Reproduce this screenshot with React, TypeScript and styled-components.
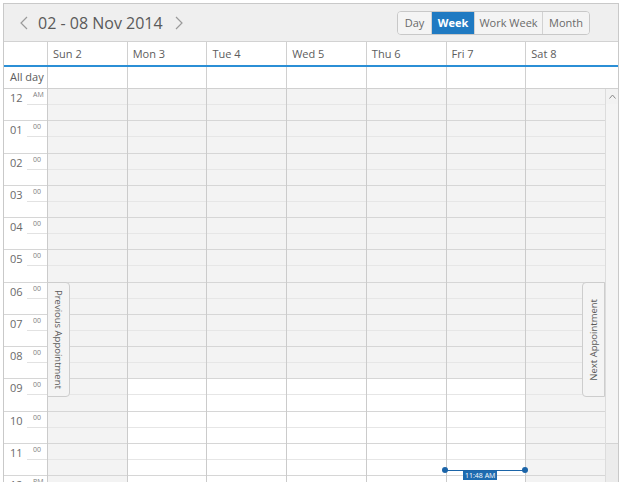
import React from 'react';
import styled, { createGlobalStyle } from 'styled-components';

const HOUR = 32.25;

const GlobalStyle = createGlobalStyle`
  html, body { margin: 0; padding: 0; background: #ffffff; }
  body { font-family: "Open Sans", "Noto Sans", sans-serif; }
`;

// Frame
const Page = styled.div`
  width: 624px;
  height: 482px;
  padding: 3px 0 0 3px;
  box-sizing: border-box;
  overflow: hidden;
`;

const Scheduler = styled.div`
  width: 616px;
  border: 1px solid #c9c9c9;
  border-bottom: none;
  box-sizing: border-box;
  color: #5c5c5c;
`;

// Toolbar
const Toolbar = styled.div`
  display: flex;
  align-items: center;
  height: 37px;
  padding: 0 28px 0 14px;
  background: #efefef;
  border-bottom: 1px solid #d2d2d2;
`;

const NavButton = styled.span`
  display: flex;
  align-items: center;
  justify-content: center;
  width: 12px;
  height: 20px;
`;

const DateTitle = styled.span`
  font-size: 16px;
  color: #5a5a5a;
  margin: 0 10px 0 8px;
`;

const ViewGroup = styled.div`
  display: flex;
  margin-left: auto;
  height: 24px;
  border: 1px solid #c8c8c8;
  border-radius: 4px;
  overflow: hidden;
  box-sizing: border-box;
`;

const ViewButton = styled.span<{ $active?: boolean; $w: number }>`
  display: flex;
  align-items: center;
  justify-content: center;
  width: ${p => p.$w}px;
  font-size: 11px;
  color: ${p => (p.$active ? '#ffffff' : '#6a6a6a')};
  font-weight: ${p => (p.$active ? 700 : 400)};
  background: ${p => (p.$active ? '#1f7ac2' : '#f4f4f4')};
  & + & { border-left: 1px solid #d2d2d2; }
`;

// Grid rows
const Row = styled.div`
  display: grid;
  grid-template-columns: 43px repeat(7, 1fr) 13px;
`;

const HeaderRow = styled(Row)`
  height: 25px;
  border-bottom: 2px solid #2b8fd6;
  box-sizing: border-box;
`;

const HeaderCell = styled.div<{ $span?: number }>`
  grid-column: span ${p => p.$span || 1};
  border-left: 1px solid #d0d0d0;
  font-size: 11px;
  line-height: 23px;
  padding-left: 5px;
  &:first-child { border-left: none; }
`;

const AllDayRow = styled(Row)`
  height: 22px;
  box-sizing: border-box;
  border-bottom: 1px solid #d0d0d0;
`;

const AllDayLabel = styled.div`
  font-size: 11px;
  line-height: 19px;
  padding-left: 6px;
`;

const AllDayCell = styled.div<{ $span?: number }>`
  grid-column: span ${p => p.$span || 1};
  border-left: 1px solid #d0d0d0;
`;

// Body
const Body = styled(Row)`
  position: relative;
  height: 394px;
  overflow: hidden;
`;

const TimeColumn = styled.div`
  display: flex;
  flex-direction: column;
`;

const HourLabel = styled.div`
  position: relative;
  flex: none;
  height: ${HOUR}px;
  box-sizing: border-box;
  border-bottom: 1px solid #d6d6d6;
  &::after {
    content: '';
    position: absolute;
    left: 23px;
    right: 0;
    top: 15px;
    border-top: 1px solid #e2e2e2;
  }
`;

const HourNumber = styled.span`
  position: absolute;
  left: 6px;
  top: 1px;
  font-size: 11px;
  color: #6a6a6a;
`;

const HourSuffix = styled.span`
  position: absolute;
  left: 29px;
  top: 1px;
  font-size: 7px;
  color: #808080;
`;

const DayColumn = styled.div`
  display: flex;
  flex-direction: column;
  border-left: 1px solid #cbcbcb;
`;

const Slot = styled.div<{ $half: boolean; $work: boolean }>`
  flex: none;
  height: ${HOUR / 2}px;
  box-sizing: border-box;
  border-bottom: 1px solid ${p => (p.$half ? '#e6e6e6' : '#d6d6d6')};
  background: ${p => (p.$work ? '#ffffff' : '#f3f3f3')};
`;

const ScrollTrack = styled.div`
  display: flex;
  flex-direction: column;
  background: #ececec;
  border-left: 1px solid #dcdcdc;
`;

const ScrollArrow = styled.div`
  display: flex;
  align-items: center;
  justify-content: center;
  height: 15px;
  background: #f2f2f2;
`;

const ScrollThumb = styled.div`
  height: 339px;
  background: #f4f4f4;
  border-bottom: 1px solid #d4d4d4;
`;

// Overlays
const NavTab = styled.div<{ $side: 'left' | 'right' }>`
  position: absolute;
  top: 193px;
  ${p => (p.$side === 'left' ? 'left: 43px;' : 'left: 578px;')}
  width: 23px;
  height: 115px;
  box-sizing: border-box;
  display: flex;
  align-items: center;
  justify-content: center;
  background: #f4f4f4;
  border: 1px solid #cdcdcd;
  border-radius: ${p => (p.$side === 'left' ? '0 4px 4px 0' : '4px 0 0 4px')};
  font-size: 9.5px;
  color: #5a5a5a;
  white-space: nowrap;
`;

const TabText = styled.span<{ $flip?: boolean }>`
  writing-mode: vertical-rl;
  transform: ${p => (p.$flip ? 'rotate(180deg)' : 'none')};
`;

const NowLine = styled.div`
  position: absolute;
  left: 441px;
  width: 80px;
  top: ${11.8 * HOUR}px;
  border-top: 1px solid #1b64a8;
`;

const NowDot = styled.span<{ $end?: boolean }>`
  position: absolute;
  top: -3.5px;
  ${p => (p.$end ? 'right: -3px;' : 'left: -3px;')}
  width: 6px;
  height: 6px;
  border-radius: 50%;
  background: #1b64a8;
`;

const NowLabel = styled.span`
  position: absolute;
  left: 18px;
  top: 0;
  padding: 0 2px;
  height: 9px;
  line-height: 9px;
  font-size: 7px;
  color: #ffffff;
  background: #1e6bb0;
`;

const days = ['Sun 2', 'Mon 3', 'Tue 4', 'Wed 5', 'Thu 6', 'Fri 7', 'Sat 8'];
const hours = ['12', '01', '02', '03', '04', '05', '06', '07', '08', '09', '10', '11', '12'];
const views = [
  { label: 'Day', w: 33 },
  { label: 'Week', w: 42, active: true },
  { label: 'Work Week', w: 67 },
  { label: 'Month', w: 46 },
];

const Chevron = ({ dir }: { dir: 'left' | 'right' }) => (
  <svg width="8" height="14" viewBox="0 0 8 14">
    <path
      d={dir === 'left' ? 'M7 1 L1 7 L7 13' : 'M1 1 L7 7 L1 13'}
      fill="none"
      stroke="#9a9a9a"
      strokeWidth="1.2"
    />
  </svg>
);

export default function App() {
  return (
    <Page>
      <GlobalStyle />
      <Scheduler>
        <Toolbar>
          <NavButton><Chevron dir="left" /></NavButton>
          <DateTitle>02 - 08 Nov 2014</DateTitle>
          <NavButton><Chevron dir="right" /></NavButton>
          <ViewGroup>
            {views.map(v => (
              <ViewButton key={v.label} $active={v.active} $w={v.w}>{v.label}</ViewButton>
            ))}
          </ViewGroup>
        </Toolbar>

        <HeaderRow>
          <HeaderCell />
          {days.map((d, i) => (
            <HeaderCell key={d} $span={i === 6 ? 2 : 1}>{d}</HeaderCell>
          ))}
        </HeaderRow>

        <AllDayRow>
          <AllDayLabel>All day</AllDayLabel>
          {days.map((d, i) => (
            <AllDayCell key={d} $span={i === 6 ? 2 : 1} />
          ))}
        </AllDayRow>

        <Body>
          <TimeColumn>
            {hours.map((h, i) => (
              <HourLabel key={i}>
                <HourNumber>{h}</HourNumber>
                <HourSuffix>{i === 0 ? 'AM' : i === 12 ? 'PM' : '00'}</HourSuffix>
              </HourLabel>
            ))}
          </TimeColumn>

          {days.map((d, di) => (
            <DayColumn key={d}>
              {Array.from({ length: hours.length * 2 }).map((_, si) => {
                const hour = si / 2;
                const work = di > 0 && di < 6 && hour >= 9 && hour < 17;
                return <Slot key={si} $half={si % 2 === 0} $work={work} />;
              })}
            </DayColumn>
          ))}

          <ScrollTrack>
            <ScrollArrow>
              <svg width="7" height="5" viewBox="0 0 7 5">
                <path d="M0.5 4.5 L3.5 1 L6.5 4.5" fill="none" stroke="#8a8a8a" strokeWidth="1" />
              </svg>
            </ScrollArrow>
            <ScrollThumb />
          </ScrollTrack>

          <NavTab $side="left"><TabText>Previous Appointment</TabText></NavTab>
          <NavTab $side="right"><TabText $flip>Next Appointment</TabText></NavTab>

          <NowLine>
            <NowDot />
            <NowDot $end />
            <NowLabel>11:48 AM</NowLabel>
          </NowLine>
        </Body>
      </Scheduler>
    </Page>
  );
}
